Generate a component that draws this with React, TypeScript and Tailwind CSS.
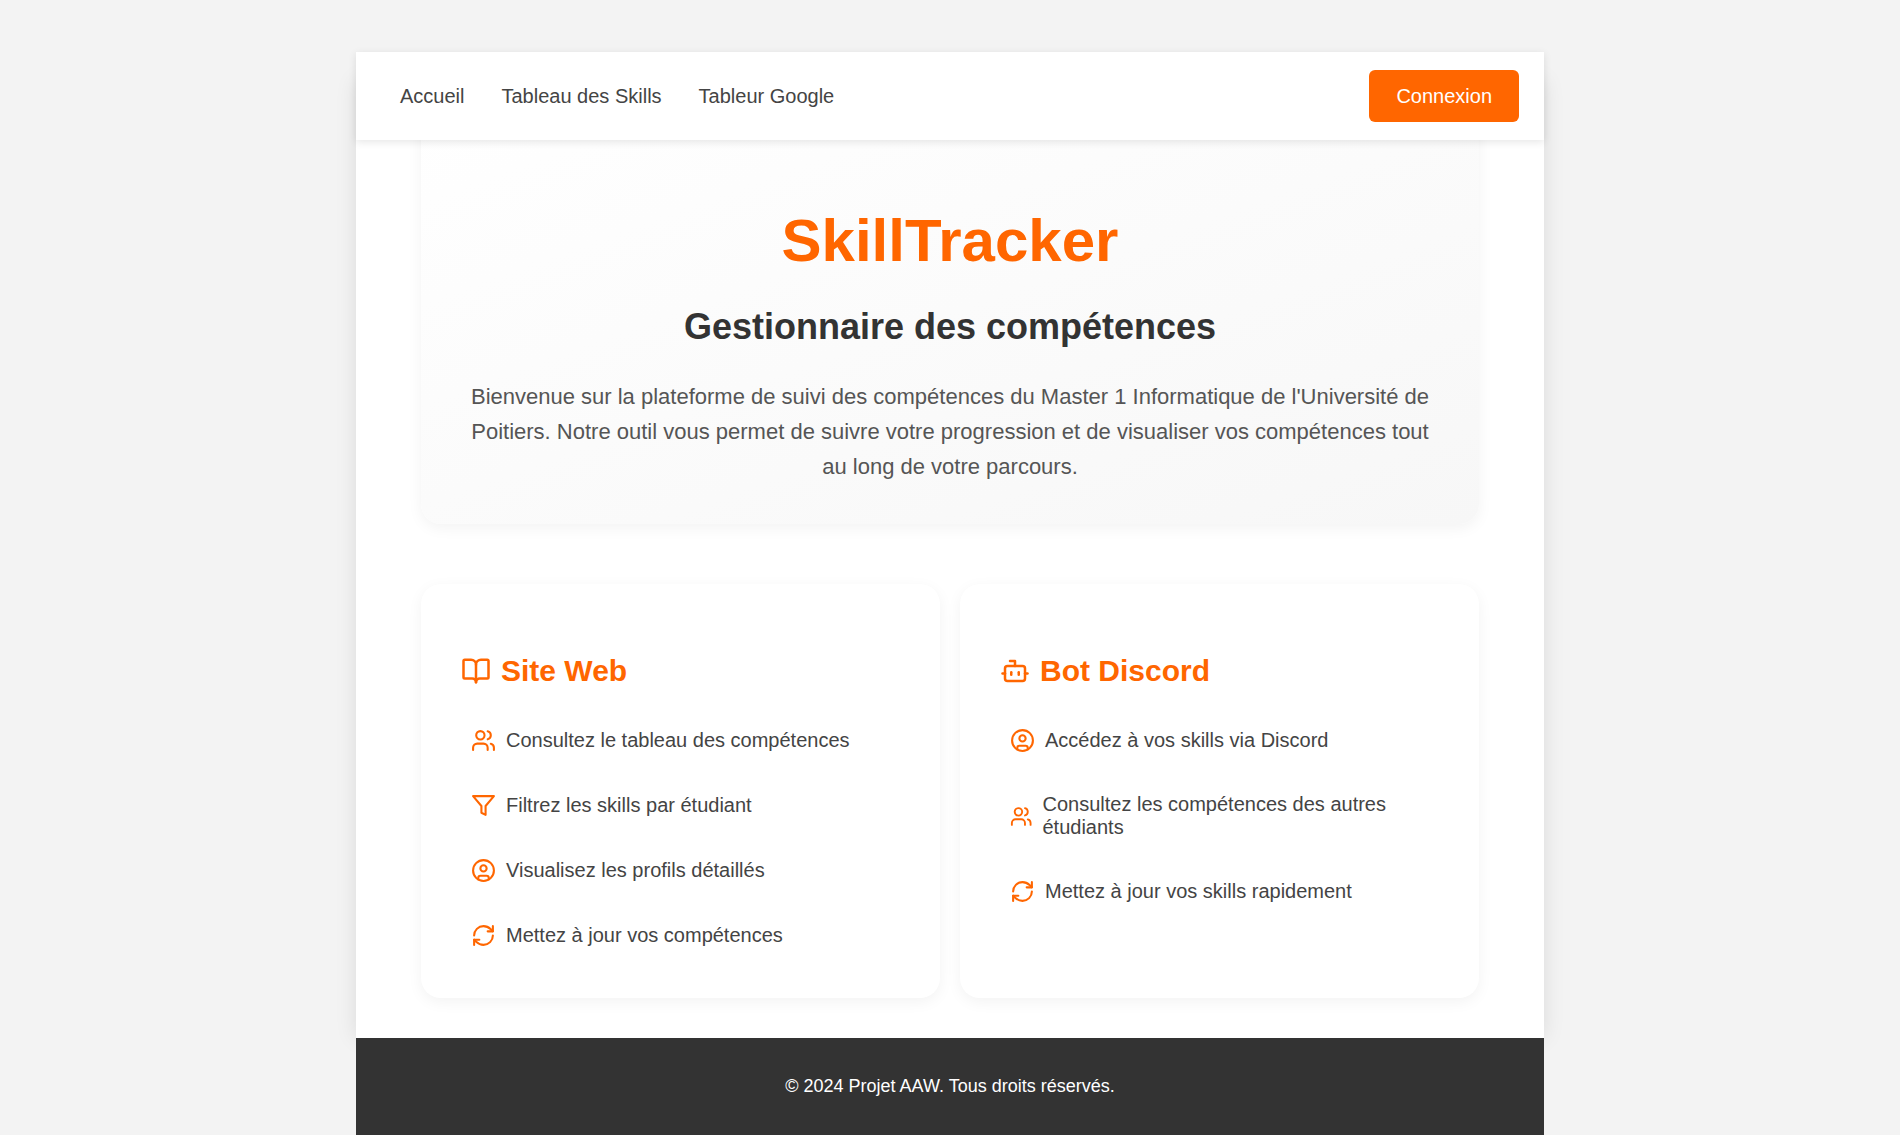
import type { ComponentType, ReactNode } from "react";
import { BookOpen, Bot, CircleUser, RefreshCw } from "lucide-react";

type IconProps = { size?: number };

function UsersIcon({ size = 24 }: IconProps) {
  return (
    <svg width={size} height={size} viewBox="0 0 24 24" fill="none" stroke="currentColor" strokeWidth="2" strokeLinecap="round" strokeLinejoin="round" aria-hidden="true">
      <path d="M16 21v-2a4 4 0 0 0-4-4H6a4 4 0 0 0-4 4v2" />
      <circle cx="9" cy="7" r="4" />
      <path d="M22 21v-2a4 4 0 0 0-3-3.87" />
      <path d="M16 3.13a4 4 0 0 1 0 7.75" />
    </svg>
  );
}

function FilterIcon({ size = 24 }: IconProps) {
  return (
    <svg width={size} height={size} viewBox="0 0 24 24" fill="none" stroke="currentColor" strokeWidth="2" strokeLinecap="round" strokeLinejoin="round" aria-hidden="true">
      <polygon points="22 3 2 3 10 12.46 10 19 14 21 14 12.46 22 3" />
    </svg>
  );
}

type Feature = { icon: ComponentType<IconProps>; text: string };

const siteFeatures: Feature[] = [
  { icon: UsersIcon, text: "Consultez le tableau des compétences" },
  { icon: FilterIcon, text: "Filtrez les skills par étudiant" },
  { icon: CircleUser, text: "Visualisez les profils détaillés" },
  { icon: RefreshCw, text: "Mettez à jour vos compétences" },
];

const botFeatures: Feature[] = [
  { icon: CircleUser, text: "Accédez à vos skills via Discord" },
  { icon: UsersIcon, text: "Consultez les compétences des autres étudiants" },
  { icon: RefreshCw, text: "Mettez à jour vos skills rapidement" },
];

function FeatureCard({ icon, title, features }: { icon: ReactNode; title: string; features: Feature[] }) {
  return (
    <section className="rounded-[20px] bg-white p-10 shadow-[0_4px_15px_rgba(0,0,0,0.05)]">
      <h3 className="my-6 flex items-center gap-[10px] text-[30px] leading-[46px] font-bold text-[#ff6600]">
        {icon}
        {title}
      </h3>
      <ul className="flex flex-col gap-5">
        {features.map(({ icon: Icon, text }) => (
          <li
            key={text}
            className="flex items-center gap-[10px] p-[10px] text-[20px] leading-[23px] text-[#444] [&>svg]:text-[#ff6600]"
          >
            <Icon size={25} />
            <span>{text}</span>
          </li>
        ))}
      </ul>
    </section>
  );
}

export default function App() {
  return (
    <div className="min-h-screen bg-[#f3f3f3] pt-[52px] font-['Liberation_Sans',Arial,sans-serif]">
      <div className="mx-auto flex max-w-[1188px] flex-col">
        <header className="relative z-10 flex items-center justify-between bg-white py-[18px] pr-[25px] pl-[44px] shadow-[0_2px_8px_rgba(0,0,0,0.1)]">
          <nav className="flex gap-[37px] text-[20px] text-[#444]">
            <a href="#accueil">Accueil</a>
            <a href="#skills">Tableau des Skills</a>
            <a href="#tableur">Tableur Google</a>
          </nav>
          <button type="button" className="h-[52px] rounded-md bg-[#ff6600] px-[27px] text-[20px] text-white">
            Connexion
          </button>
        </header>

        <main className="-mt-[60px] bg-white px-[65px] pt-5 pb-10 shadow-[0_0_20px_rgba(0,0,0,0.1)]">
          <section className="rounded-[20px] bg-[linear-gradient(160deg,#ffffff,#f7f7f7)] px-10 pt-[111px] pb-10 text-center shadow-[0_4px_15px_rgba(0,0,0,0.05)]">
            <h1 className="text-[60px] leading-[60px] font-bold text-[#ff6600]">SkillTracker</h1>
            <h2 className="mt-9 text-[36px] leading-10 font-bold text-[#333]">Gestionnaire des compétences</h2>
            <p className="mt-8 text-[22px] leading-[35px] text-[#555]">
              Bienvenue sur la plateforme de suivi des compétences du Master 1 Informatique de l'Université de
              Poitiers. Notre outil vous permet de suivre votre progression et de visualiser vos compétences tout
              au long de votre parcours.
            </p>
          </section>

          <div className="mt-[60px] grid grid-cols-1 gap-5 md:grid-cols-2">
            <FeatureCard icon={<BookOpen size={30} />} title="Site Web" features={siteFeatures} />
            <FeatureCard icon={<Bot size={30} />} title="Bot Discord" features={botFeatures} />
          </div>
        </main>

        <footer className="relative bg-[#333] py-9 text-center text-[18px] leading-[25px] text-white">
          © 2024 Projet AAW. Tous droits réservés.
        </footer>
      </div>
    </div>
  );
}
